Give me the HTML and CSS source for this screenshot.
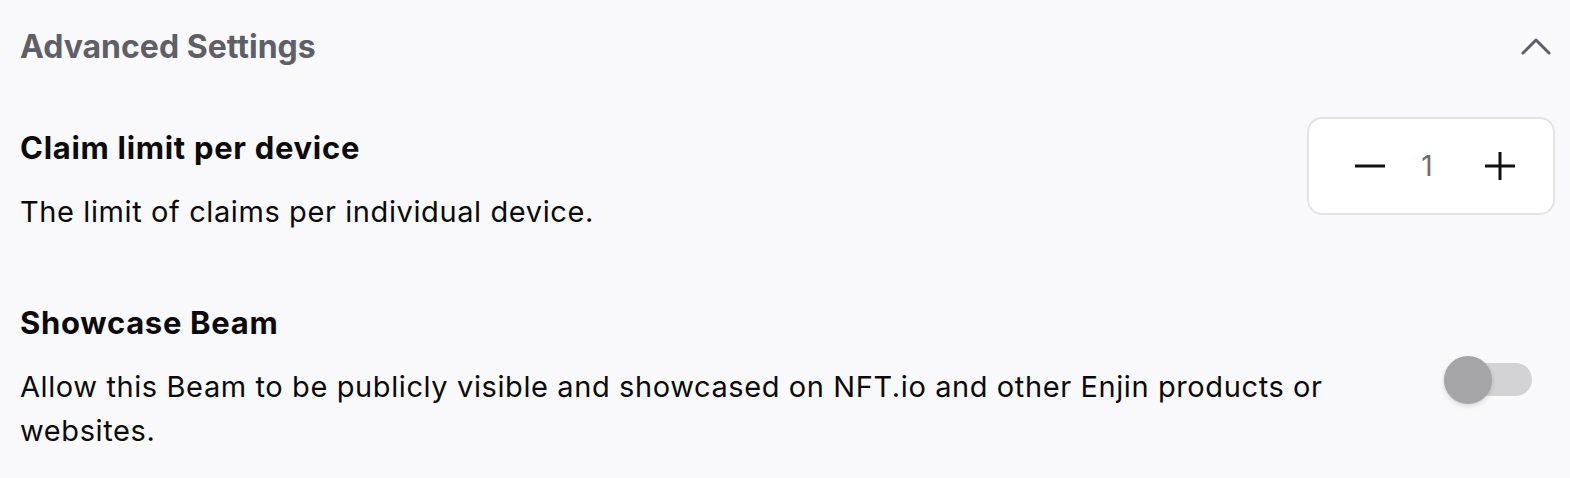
FILE: index.html
```html
<!DOCTYPE html>
<html lang="en">
<head>
  <meta charset="UTF-8">
  <title>Advanced Settings</title>
  <link rel="stylesheet" href="styles.css">
</head>
<body>
  <section class="panel">
    <div class="panel-head">
      <h2>Advanced Settings</h2>
      <button class="chevron" aria-label="Collapse">
        <svg width="30" height="18" viewBox="0 0 30 18"><path d="M2 16 L15 3 L28 16" fill="none" stroke="#5f5f67" stroke-width="3" stroke-linecap="round" stroke-linejoin="round"/></svg>
      </button>
    </div>

    <div class="setting">
      <div class="setting-text">
        <h3>Claim limit per device</h3>
        <p>The limit of claims per individual device.</p>
      </div>
      <div class="stepper">
        <button class="step" aria-label="Decrease">
          <svg width="30" height="30" viewBox="0 0 30 30"><path d="M0 15 H30" stroke="#111" stroke-width="3"/></svg>
        </button>
        <span class="value">1</span>
        <button class="step" aria-label="Increase">
          <svg width="30" height="30" viewBox="0 0 30 30"><path d="M0 15 H30 M15 1 V29" stroke="#111" stroke-width="3"/></svg>
        </button>
      </div>
    </div>

    <div class="setting showcase">
      <div class="setting-text">
        <h3>Showcase Beam</h3>
        <p>Allow this Beam to be publicly visible and showcased on NFT.io and other Enjin products or websites.</p>
      </div>
      <label class="toggle">
        <span class="track"></span>
        <span class="thumb"></span>
      </label>
    </div>
  </section>
</body>
</html>
```

FILE: styles.css
```css
body {
  margin: 0;
  background: #f9f9fb;
  font-family: Inter, "Noto Sans", sans-serif;
  color: #0b0b0d;
}
.panel { padding: 0 15px 0 20px; }
.panel-head {
  display: flex;
  align-items: center;
  justify-content: space-between;
  height: 92px;
}
.panel-head h2 {
  margin: 0;
  font-size: 32px;
  font-weight: 700;
  color: #5f5f67;
}
.chevron {
  border: none;
  background: none;
  padding: 0;
  margin-right: 4px;
  display: flex;
}
.setting {
  display: flex;
  justify-content: space-between;
  align-items: flex-start;
  margin-top: 25px;
}
.setting-text {
  max-width: 1345px;
  padding-top: 13px;
}
.setting h3 {
  margin: 0;
  font-size: 31px;
  font-weight: 700;
  line-height: 36px;
  letter-spacing: 0.7px;
}
.setting p {
  margin: 24px 0 0;
  font-size: 29px;
  line-height: 44px;
  font-weight: 400;
  letter-spacing: 0.6px;
}
.stepper {
  box-sizing: border-box;
  width: 248px;
  height: 98px;
  background: #fff;
  border: 2px solid #e4e4e8;
  border-radius: 15px;
  display: flex;
  align-items: center;
  padding-left: 46px;
}
.step {
  border: none;
  background: none;
  padding: 0;
  display: flex;
}
.value {
  width: 40px;
  margin: 0 38px 0 22px;
  text-align: center;
  font-size: 28px;
  color: #6b6b73;
}
.showcase { margin-top: 58px; }
.toggle {
  position: relative;
  width: 88px;
  height: 48px;
  display: block;
  flex-shrink: 0;
  margin: 64px 23px 0 0;
}
.track {
  position: absolute;
  left: 0;
  top: 7px;
  width: 88px;
  height: 33px;
  border-radius: 17px;
  background: #d3d3d6;
}
.thumb {
  position: absolute;
  left: 0;
  top: 0;
  width: 48px;
  height: 48px;
  border-radius: 50%;
  background: #a5a4a9;
  box-shadow: 0 2px 5px rgba(0,0,0,0.15);
}
```
